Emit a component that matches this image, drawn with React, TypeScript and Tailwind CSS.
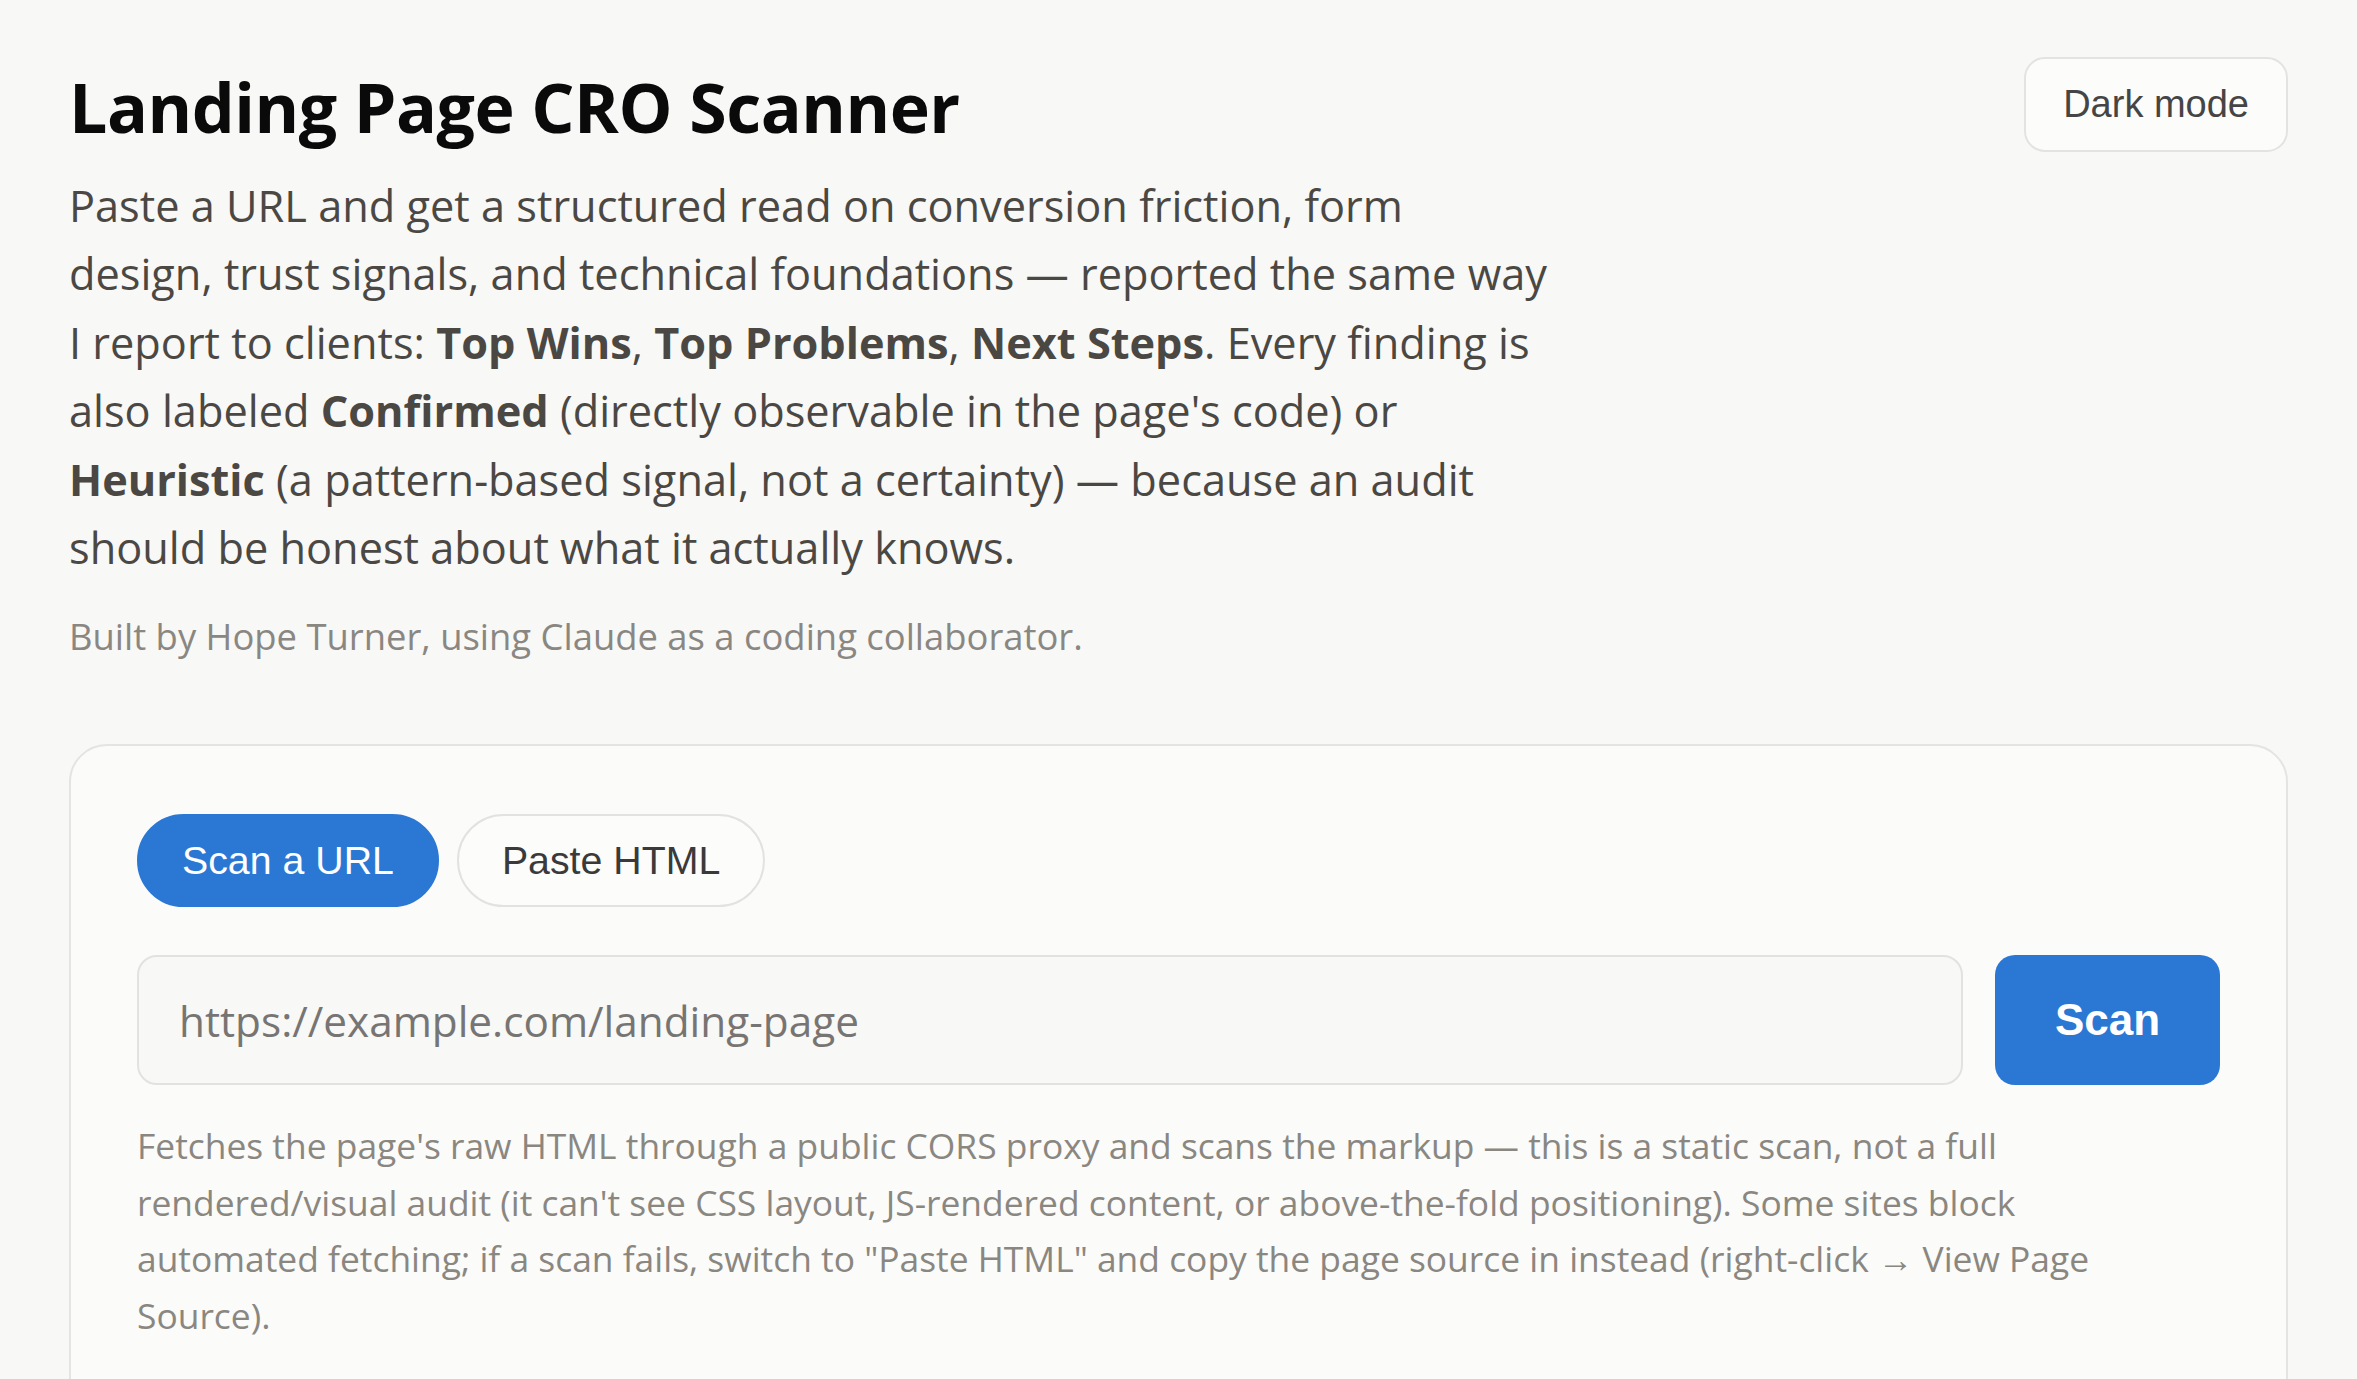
import React from "react";

export default function App() {
  const sans = "font-['Open_Sans',sans-serif]";
  return (
    <div className={`min-h-[1379px] bg-[#f8f8f7] ${sans}`}>
      <div className="px-[69px] pt-[57px]">
        <div className="flex items-start justify-between">
          <div className="pt-[9px]">
            <h1 className="text-[68px] leading-[82px] font-bold text-[#0a0a0a] tracking-[-0.5px]">
              Landing Page CRO Scanner
            </h1>
            <p className="mt-[24px] max-w-[1480px] text-[43.3px] leading-[68.4px] text-[#4b4844]">
              Paste a URL and get a structured read on conversion friction, form design, trust signals, and technical foundations — reported the same way I report to clients: <strong className="font-bold">Top Wins</strong>, <strong className="font-bold">Top Problems</strong>, <strong className="font-bold">Next Steps</strong>. Every finding is also labeled <strong className="font-bold">Confirmed</strong> (directly observable in the page's code) or <strong className="font-bold">Heuristic</strong> (a pattern-based signal, not a certainty) — because an audit should be honest about what it actually knows.
            </p>
            <p className="mt-[28px] text-[36.4px] leading-[52px] text-[#8a8782]">
              Built by Hope Turner, using Claude as a coding collaborator.
            </p>
          </div>
          <button className="h-[95px] rounded-[21px] border-2 border-[#e3e3e2] bg-[#fcfcfb] px-[37px] font-['Liberation_Sans',Arial,sans-serif] text-[38px] text-[#454545]">
            Dark mode
          </button>
        </div>

        <div className="mt-[82px] rounded-[38px] border-2 border-[#e4e4e3] bg-[#fbfbfa] px-[66px] pt-[68px] pb-[80px]">
          <div className="flex gap-[18px]">
            <button className="h-[93px] rounded-full border-2 border-[#2b78d4] bg-[#2b78d4] px-[43px] font-['Liberation_Sans',Arial,sans-serif] text-[39.3px] text-white">
              Scan a URL
            </button>
            <button className="h-[93px] rounded-full border-2 border-[#e2e2e1] bg-[#fcfcfb] px-[43px] font-['Liberation_Sans',Arial,sans-serif] text-[39.3px] text-[#3a3a3a]">
              Paste HTML
            </button>
          </div>

          <div className="mt-[48px] flex gap-[32px]">
            <input
              type="text"
              placeholder="https://example.com/landing-page"
              className="h-[130px] flex-1 rounded-[20px] border-2 border-[#e2e2e1] bg-[#f8f8f7] px-[40px] text-[42.3px] text-[#333] placeholder:text-[#777573] outline-none"
            />
            <button className="h-[130px] w-[225px] rounded-[20px] bg-[#2b78d4] font-['Liberation_Sans',Arial,sans-serif] text-[44px] font-bold text-white">
              Scan
            </button>
          </div>

          <p className="mt-[32px] max-w-[2060px] text-[35.4px] leading-[56.5px] text-[#8a8781]">
            Fetches the page's raw HTML through a public CORS proxy and scans the markup — this is a static scan, not a full rendered/visual audit (it can't see CSS layout, JS-rendered content, or above-the-fold positioning). Some sites block automated fetching; if a scan fails, switch to "Paste HTML" and copy the page source in instead (right-click → View Page Source).
          </p>
        </div>
      </div>
    </div>
  );
}
